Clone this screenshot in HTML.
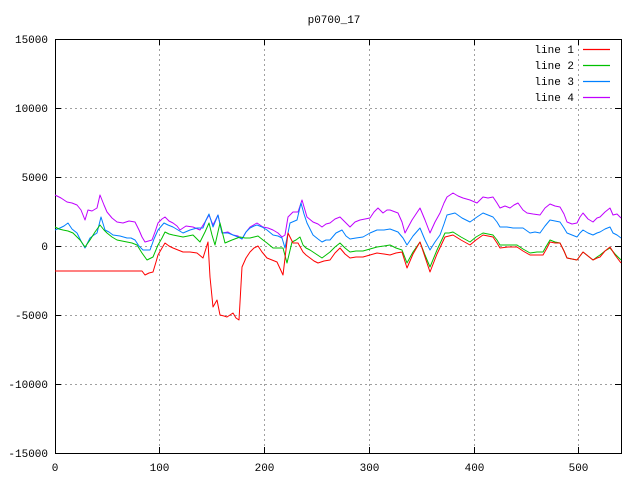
<!DOCTYPE html>
<html><head><meta charset="utf-8"><style>html,body{margin:0;padding:0;background:#fff}svg{display:block}</style></head><body>
<svg width="640" height="480" viewBox="0 0 640 480" xmlns="http://www.w3.org/2000/svg" font-family="Liberation Mono, DejaVu Sans Mono, monospace" font-size="11">
<g stroke="#a0a0a0" stroke-dasharray="2,3" stroke-width="1">
<line x1="55" y1="108.5" x2="621" y2="108.5"/><line x1="55" y1="177.5" x2="621" y2="177.5"/><line x1="55" y1="246.5" x2="621" y2="246.5"/><line x1="55" y1="315.5" x2="621" y2="315.5"/><line x1="55" y1="384.5" x2="621" y2="384.5"/>
<line x1="159.5" y1="39" x2="159.5" y2="453"/><line x1="264.5" y1="39" x2="264.5" y2="453"/><line x1="369.5" y1="39" x2="369.5" y2="453"/><line x1="474.5" y1="39" x2="474.5" y2="453"/><line x1="578.5" y1="39" x2="578.5" y2="453"/>
</g>
<g stroke="#000" stroke-width="1">
<rect x="55.5" y="39.5" width="566" height="414" fill="none"/>
<path d="M55 108.5h6M55 177.5h6M55 246.5h6M55 315.5h6M55 384.5h6M621 108.5h-6M621 177.5h-6M621 246.5h-6M621 315.5h-6M621 384.5h-6M159.5 453v-6M264.5 453v-6M369.5 453v-6M474.5 453v-6M578.5 453v-6M159.5 39v6M264.5 39v6M369.5 39v6M474.5 39v6M578.5 39v6"/>
</g>
<g text-anchor="end" fill="#000">
<text x="48" y="43">15000</text><text x="48" y="112">10000</text><text x="48" y="181">5000</text><text x="48" y="250">0</text><text x="48" y="319">-5000</text><text x="48" y="388">-10000</text><text x="48" y="457">-15000</text>
</g>
<g text-anchor="middle" fill="#000">
<text x="55" y="471">0</text><text x="159.5" y="471">100</text><text x="264.5" y="471">200</text><text x="369.5" y="471">300</text><text x="474.5" y="471">400</text><text x="578.5" y="471">500</text>
<text x="334" y="23">p0700_17</text>
</g>
<g text-anchor="end" fill="#000">
<text x="574" y="53">line 1</text><text x="574" y="69">line 2</text><text x="574" y="85">line 3</text><text x="574" y="101">line 4</text>
</g>
<line x1="583" y1="49.5" x2="610" y2="49.5" stroke="#ff0000" stroke-width="1.2"/>
<line x1="583" y1="65.5" x2="610" y2="65.5" stroke="#00c000" stroke-width="1.2"/>
<line x1="583" y1="81.5" x2="610" y2="81.5" stroke="#0080ff" stroke-width="1.2"/>
<line x1="583" y1="97.5" x2="610" y2="97.5" stroke="#c000ff" stroke-width="1.2"/>
<g stroke-width="1" fill="none" stroke-linejoin="round">
<polyline stroke="#c000ff" points="55,195 61,198 67,202 72,203 77,205 81,210 85,220 88,210 92,211 97,208 100,195 104,205 107,212 112,218 117,222 123,223 129,221 135,222 139,230 142,237 145,242 152,240 155,232 158,223 162,219 165,217 169,221 173,223 177,226 180,230 186,226 193,227 200,230 205,222 209,215 213,225 218,215 222,233 228,232 233,235 238,236 242,239 246,232 250,227 257,223 263,227 268,228 273,230 278,233 282,237 285,235 288,217 293,212 298,212 302,200 307,217 313,222 318,224 322,227 326,224 330,223 335,219 340,217 345,222 350,227 355,222 360,220 365,219 370,218 374,212 378,208 383,213 387,210 390,210 398,213 402,222 405,233 412,220 420,208 425,220 430,233 435,222 440,213 444,203 447,197 453,193 458,196 463,198 470,200 477,203 483,197 488,198 493,197 497,203 500,208 505,206 510,208 514,205 518,203 523,210 527,213 533,214 540,215 545,208 550,204 555,206 560,207 564,214 567,222 572,224 577,223 580,217 583,213 588,219 593,222 597,218 600,217 605,212 610,208 613,215 617,214 621,218"/>
<polyline stroke="#0080ff" points="55,230 60,228 64,226 68,223 72,229 77,233 81,241 85,248 90,238 94,235 97,233 101,217 105,230 109,232 113,235 120,236 127,238 131,238 135,240 139,246 143,250 150,250 154,239 158,230 164,223 168,225 173,227 178,230 183,233 190,230 197,228 203,228 206,220 209,214 213,227 218,215 222,233 228,233 233,235 238,237 242,239 246,232 250,228 254,226 257,225 262,227 267,230 273,235 278,236 282,238 285,248 290,223 297,220 301,203 304,214 307,223 310,229 313,235 318,239 322,242 326,240 330,240 336,233 342,230 346,236 350,239 356,238 363,237 370,233 377,230 384,230 390,229 398,232 403,238 407,245 413,236 420,228 425,240 430,250 435,242 440,235 444,224 447,215 451,214 455,213 462,218 470,222 477,217 483,213 488,215 493,217 497,222 500,227 507,227 513,228 518,228 523,228 530,233 535,232 540,233 545,226 550,220 555,221 560,222 564,228 567,233 572,235 577,237 580,233 583,230 588,233 593,235 597,233 600,232 605,229 610,227 613,233 617,235 621,238"/>
<polyline stroke="#00c000" points="55,227 59,229 63,230 68,231 73,233 77,237 80,240 85,247 90,240 95,232 100,225 104,230 107,233 112,237 117,240 122,241 127,242 132,243 137,245 142,253 147,260 153,257 158,245 162,238 165,232 169,234 173,235 178,236 183,237 188,236 193,235 197,239 200,242 205,232 209,223 212,235 215,245 220,223 225,243 232,240 240,237 245,238 250,238 254,237 258,236 263,240 267,243 273,248 278,248 283,248 287,263 292,242 296,240 300,237 303,245 306,248 310,250 316,254 322,258 326,255 330,252 335,247 340,243 345,248 350,252 356,251 363,251 370,249 377,247 384,246 390,245 396,248 402,250 407,263 413,252 420,242 425,255 430,267 437,250 445,233 449,233 453,232 461,237 470,242 476,237 483,233 488,234 493,235 497,240 500,245 508,245 517,245 523,249 530,253 537,252 543,252 547,245 550,240 555,242 560,243 564,251 567,258 572,259 577,260 580,256 583,252 588,256 593,260 597,257 600,255 605,251 610,248 615,254 621,260"/>
<polyline stroke="#ff0000" points="55,271 142,271 145,275 149,273 153,272 156,262 158,255 162,248 165,243 169,246 173,248 178,250 183,252 190,252 197,253 203,258 208,242 210,277 213,307 217,300 220,315 224,316 227,317 230,315 233,313 236,318 239,320 242,267 246,258 250,252 254,248 258,246 262,252 267,258 272,260 277,262 283,275 288,233 293,243 298,243 303,252 306,255 310,258 314,261 318,263 324,261 330,260 335,253 340,248 345,254 350,258 356,257 363,257 370,255 377,253 384,254 390,255 396,253 402,252 407,268 413,254 420,242 425,257 430,272 437,254 445,237 449,236 453,235 461,240 470,245 476,240 483,235 488,236 493,237 497,243 500,248 508,247 517,247 523,251 530,255 537,255 543,255 547,248 550,242 555,243 560,243 564,251 567,258 572,259 577,260 580,256 583,252 588,256 593,260 597,258 600,257 605,251 610,247 615,255 621,263"/>
</g>
</svg>
</body></html>
